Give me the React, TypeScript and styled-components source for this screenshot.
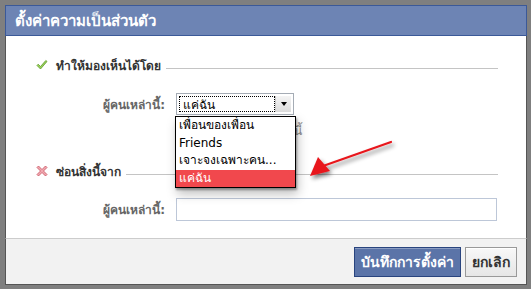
import React from "react";
import styled, { createGlobalStyle } from "styled-components";

const GlobalStyle = createGlobalStyle`
  html, body {
    margin: 0;
    padding: 0;
    background: #7f7f7f;
  }
  body {
    font-family: Tahoma, "DejaVu Sans", "Liberation Sans", sans-serif;
    font-size: 12px;
    color: #333;
  }
`;

const Page = styled.div`
  width: 531px;
  height: 289px;
  padding: 5px 4px 4px 5px;
  box-sizing: border-box;
`;

const Dialog = styled.div`
  width: 522px;
  height: 280px;
  display: flex;
  flex-direction: column;
  box-sizing: border-box;
  position: relative;
`;

const TitleBar = styled.div`
  height: 31px;
  box-sizing: border-box;
  background: #6d84b4;
  border: 1px solid #3b5998;
  color: #fff;
  font-size: 15px;
  font-weight: bold;
  display: flex;
  align-items: center;
  padding-left: 9px;
`;

const Body = styled.div`
  flex: 1;
  background: #fff;
  border-left: 1px solid #555;
  border-right: 1px solid #555;
  padding: 20px 28px 0 30px;
  display: flex;
  flex-direction: column;
`;

const SectionHeader = styled.div<{ $top: number }>`
  display: flex;
  align-items: center;
  height: 18px;
  margin-top: ${(p) => p.$top}px;
  font-weight: bold;
  color: #333;
`;

const HeaderIcon = styled.span`
  width: 12px;
  height: 12px;
  display: flex;
  margin-right: 8px;
`;

const HeaderLine = styled.div`
  flex: 1;
  height: 1px;
  background: #c4c4c4;
  margin: 6px 0 0 5px;
`;

const FieldRow = styled.div<{ $top: number }>`
  display: flex;
  align-items: center;
  margin-top: ${(p) => p.$top}px;
`;

const Label = styled.label`
  width: 129px;
  text-align: right;
  color: #666;
  font-weight: bold;
  margin-right: 11px;
  flex-shrink: 0;
`;

const SelectWrap = styled.div`
  position: relative;
  width: 118px;
`;

const SelectBox = styled.div`
  height: 22px;
  box-sizing: border-box;
  border: 1px solid #a5acb5;
  background: #fff;
  display: flex;
  padding: 2px;
`;

const SelectValue = styled.div`
  flex: 1;
  border: 1px dotted #000;
  display: flex;
  align-items: center;
  padding-left: 3px;
  color: #000;
`;

const SelectArrow = styled.div`
  width: 15px;
  background: linear-gradient(#f4f4f4, #dcdcdc);
  border-left: 1px solid #c8c8c8;
  display: flex;
  align-items: center;
  justify-content: center;
  &::after {
    content: "";
    border-left: 3px solid transparent;
    border-right: 3px solid transparent;
    border-top: 4px solid #000;
  }
`;

const Options = styled.ul`
  position: absolute;
  top: 23px;
  left: -1px;
  width: 121px;
  margin: 0;
  padding: 0;
  list-style: none;
  background: #fff;
  border: 1px solid #000;
  box-sizing: border-box;
  box-shadow: 1px 2px 2px rgba(0, 0, 0, 0.35), 2px 6px 10px rgba(0, 0, 0, 0.25);
  z-index: 2;
`;

const Option = styled.li<{ $active?: boolean }>`
  height: 17.5px;
  line-height: 17px;
  padding-left: 3px;
  white-space: nowrap;
  color: ${(p) => (p.$active ? "#fff" : "#000")};
  background: ${(p) => (p.$active ? "#f1484d" : "transparent")};
  font-size: 12px;
`;

const HintRow = styled.div`
  display: flex;
  justify-content: flex-end;
  width: 266px;
  height: 16px;
  margin-top: 6px;
  color: #888;
  white-space: nowrap;
`;

const TextInput = styled.input`
  width: 321px;
  height: 23px;
  box-sizing: border-box;
  border: 1px solid #bdc7d8;
  padding: 2px 4px;
  font: inherit;
`;

const Footer = styled.div`
  height: 47px;
  box-sizing: border-box;
  background: #f2f2f2;
  border-top: 1px solid #ccc;
  border-left: 1px solid #555;
  border-right: 1px solid #555;
  border-bottom: 1px solid #555;
  display: flex;
  justify-content: flex-end;
  align-items: flex-start;
  padding: 8px 9px 0 0;
  gap: 4px;
`;

const Button = styled.button<{ $primary?: boolean }>`
  height: 30px;
  box-sizing: border-box;
  padding: 0 6px;
  font-family: inherit;
  font-size: 14px;
  font-weight: bold;
  cursor: pointer;
  color: ${(p) => (p.$primary ? "#fff" : "#333")};
  background: ${(p) => (p.$primary ? "#5b74a8" : "linear-gradient(#f8f8f8, #e6e6e6)")};
  border: 1px solid ${(p) => (p.$primary ? "#29447e" : "#999")};
  box-shadow: ${(p) => (p.$primary ? "inset 0 1px 0 #8a9cc2" : "inset 0 1px 0 #fff")};
`;

const ArrowOverlay = styled.svg`
  position: absolute;
  left: 290px;
  top: 125px;
  overflow: visible;
  z-index: 3;
`;

const CheckIcon = () => (
  <svg width="12" height="12" viewBox="0 0 12 12">
    <path
      d="M1 6.5 L4.5 10 L11 2.5 L9.8 1.5 L4.5 7.5 L2.2 5.2 Z"
      fill="#9ad05a"
      stroke="#5e9a2a"
      strokeWidth="0.8"
      strokeLinejoin="round"
    />
  </svg>
);

const CrossIcon = () => (
  <svg width="12" height="12" viewBox="0 0 12 12">
    <path
      d="M2.5 1 L6 4.5 L9.5 1 L11 2.5 L7.5 6 L11 9.5 L9.5 11 L6 7.5 L2.5 11 L1 9.5 L4.5 6 L1 2.5 Z"
      fill="#f0a8b0"
      stroke="#c8505e"
      strokeWidth="0.8"
      strokeLinejoin="round"
    />
  </svg>
);

export default function App() {
  return (
    <Page>
      <GlobalStyle />
      <Dialog>
        <TitleBar>ตั้งค่าความเป็นส่วนตัว</TitleBar>
        <Body>
          <SectionHeader $top={0}>
            <HeaderIcon>
              <CheckIcon />
            </HeaderIcon>
            ทำให้มองเห็นได้โดย
            <HeaderLine />
          </SectionHeader>
          <FieldRow $top={19}>
            <Label>ผู้คนเหล่านี้:</Label>
            <SelectWrap>
              <SelectBox>
                <SelectValue>แค่ฉัน</SelectValue>
                <SelectArrow />
              </SelectBox>
              <Options>
                <Option>เพื่อนของเพื่อน</Option>
                <Option>Friends</Option>
                <Option>เจาะจงเฉพาะคน...</Option>
                <Option $active>แค่ฉัน</Option>
              </Options>
            </SelectWrap>
          </FieldRow>
          <HintRow>เฉพาะคุณที่เห็นสิ่งนี้</HintRow>
          <SectionHeader $top={25}>
            <HeaderIcon>
              <CrossIcon />
            </HeaderIcon>
            ซ่อนสิ่งนี้จาก
            <HeaderLine />
          </SectionHeader>
          <FieldRow $top={18}>
            <Label>ผู้คนเหล่านี้:</Label>
            <TextInput />
          </FieldRow>
        </Body>
        <Footer>
          <Button $primary>บันทึกการตั้งค่า</Button>
          <Button>ยกเลิก</Button>
        </Footer>
        <ArrowOverlay width="100" height="60">
          <defs>
            <filter id="arrowShadow" x="-20%" y="-20%" width="140%" height="160%">
              <feGaussianBlur in="SourceAlpha" stdDeviation="2" />
              <feOffset dx="2" dy="3" />
              <feComponentTransfer>
                <feFuncA type="linear" slope="0.5" />
              </feComponentTransfer>
              <feMerge>
                <feMergeNode />
                <feMergeNode in="SourceGraphic" />
              </feMerge>
            </filter>
          </defs>
          <g filter="url(#arrowShadow)">
            <line x1="96" y1="12" x2="28" y2="36" stroke="#e8181c" strokeWidth="2.2" strokeLinecap="round" />
            <polygon points="15,46 23,27 35,41" fill="#e8181c" />
          </g>
        </ArrowOverlay>
      </Dialog>
    </Page>
  );
}
